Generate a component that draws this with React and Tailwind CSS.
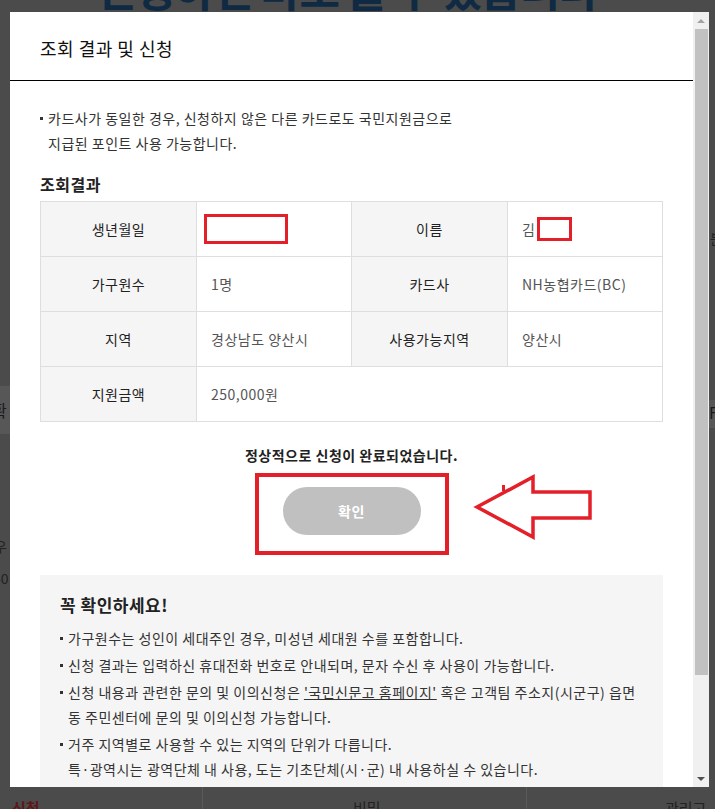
import React from "react";

const font = "font-['Noto_Sans_CJK_KR','Noto_Sans',sans-serif]";

function Bullet({ children }) {
  return (
    <li className="pl-[8px]">
      <span className="inline-block w-[3px] h-[3px] bg-[#333] align-middle -ml-[8px] mr-[5px] mb-[3px]"></span>
      {children}
    </li>
  );
}

function Th({ children }) {
  return (
    <th className="w-[156px] h-[55px] bg-[#f5f5f5] border border-[#dedede] font-normal text-[#222] text-center">
      {children}
    </th>
  );
}

function Td({ children, colSpan }) {
  return (
    <td colSpan={colSpan} className="h-[55px] border border-[#dedede] text-[#555] pl-[14px]">
      {children}
    </td>
  );
}

function Scrollbar() {
  return (
    <div className="w-[16px] bg-[#f0f0f0] flex flex-col items-center">
      <div className="h-[17px] flex items-center justify-center">
        <div className="w-0 h-0 border-l-[4px] border-r-[4px] border-b-[4px] border-l-transparent border-r-transparent border-b-[#a3a3a3]"></div>
      </div>
      <div className="w-[13px] h-[646px] bg-[#c1c1c1]"></div>
      <div className="flex-1"></div>
      <div className="h-[17px] flex items-center justify-center">
        <div className="w-0 h-0 border-l-[4px] border-r-[4px] border-t-[4px] border-l-transparent border-r-transparent border-t-[#505050]"></div>
      </div>
    </div>
  );
}

export default function App() {
  return (
    <div className={`relative w-[715px] h-[809px] overflow-hidden bg-[#4b4b4b] ${font}`}>
      {/* page behind the overlay */}
      <div className="absolute left-[96px] -top-[34px] text-[44px] leading-none font-bold text-[#0f2a42] whitespace-nowrap tracking-[-1.5px]">
        신청하면 바로 쓸 수 있습니다
      </div>
      <div className="absolute left-0 top-[386px] w-[10px] h-[48px] bg-[#575757] overflow-hidden">
        <span className="block -ml-[8px] mt-[12px] text-[16px] text-[#1a1a1a]">확</span>
      </div>
      <div className="absolute left-[-6px] top-[536px] text-[14px] text-[#222]">우</div>
      <div className="absolute left-[-4px] top-[568px] text-[14px] text-[#222]">-0</div>
      <div className="absolute left-[710px] top-[228px] text-[14px] text-[#222]">분</div>
      <div className="absolute left-[709px] top-[400px] w-[6px] h-[28px] bg-[#575757] text-[16px] text-[#1a1a1a]">F</div>
      <div className="absolute left-0 top-[787px] w-[715px] h-[22px] flex text-[15px] leading-[20px]">
        <div className="w-[203px] border-r border-[#5a5a5a] pl-[12px] pt-[11px] text-[#5c1818] font-bold">신청</div>
        <div className="w-[324px] border-r border-[#5a5a5a] pl-[150px] pt-[11px] text-[#222]">비밀</div>
        <div className="flex-1 pl-[138px] pt-[11px] text-[#222]">관리고</div>
      </div>

      {/* modal */}
      <div className="absolute left-[10px] top-[12px] w-[699px] h-[775px] bg-white flex">
        <div className="flex-1 flex flex-col overflow-hidden">
          <div className="h-[69px] pt-[4px] pl-[30px] flex items-center border-b border-black shrink-0">
            <h2 className="text-[18px] text-[#111] tracking-[0.5px]">조회 결과 및 신청</h2>
          </div>
          <div className="px-[30px] pt-[25px] text-[14px] tracking-[0.5px]">
            <ul className="leading-[25px] text-[#333]">
              <Bullet>
                카드사가 동일한 경우, 신청하지 않은 다른 카드로도 국민지원금으로
                <br />지급된 포인트 사용 가능합니다.
              </Bullet>
            </ul>
            <h3 className="mt-[16px] text-[16px] font-bold leading-[24px] text-[#222]">조회결과</h3>
            <table className="mt-[5px] w-[623px] border-collapse table-fixed">
              <tbody>
                <tr>
                  <Th>생년월일</Th>
                  <Td>
                    <span className="inline-block align-middle w-[84px] h-[30px] border-[3px] border-[#e3202a] -ml-[7px]"></span>
                  </Td>
                  <Th>이름</Th>
                  <Td>
                    <span className="align-middle">김</span>
                    <span className="inline-block align-middle w-[35px] h-[24px] border-[3px] border-[#e3202a] ml-[2px]"></span>
                  </Td>
                </tr>
                <tr>
                  <Th>가구원수</Th>
                  <Td>1명</Td>
                  <Th>카드사</Th>
                  <Td>NH농협카드(BC)</Td>
                </tr>
                <tr>
                  <Th>지역</Th>
                  <Td>경상남도 양산시</Td>
                  <Th>사용가능지역</Th>
                  <Td>양산시</Td>
                </tr>
                <tr>
                  <Th>지원금액</Th>
                  <Td colSpan={3}>250,000원</Td>
                </tr>
              </tbody>
            </table>
            <p className="mt-[22px] text-center font-bold text-[14px] leading-[22px] text-[#222]">
              정상적으로 신청이 완료되었습니다.
            </p>
            <div className="mt-[21px] flex justify-center">
              <button className="w-[138px] h-[48px] rounded-full bg-[#c0c0c0] text-white font-bold text-[14px]">
                확인
              </button>
            </div>
            <div className="mt-[40px] bg-[#f5f5f5] pl-[20px] pr-[10px] pt-[18px] pb-[20px]">
              <h4 className="text-[17px] font-bold leading-[24px] text-[#222]">꼭 확인하세요!</h4>
              <ul className="mt-[9px] leading-[25px] text-[#333] space-y-[2px]">
                <Bullet>가구원수는 성인이 세대주인 경우, 미성년 세대원 수를 포함합니다.</Bullet>
                <Bullet>신청 결과는 입력하신 휴대전화 번호로 안내되며, 문자 수신 후 사용이 가능합니다.</Bullet>
                <Bullet>
                  신청 내용과 관련한 문의 및 이의신청은 <span className="underline">'국민신문고 홈페이지'</span> 혹은 고객팀 주소지(시군구) 읍면
                  <br />동 주민센터에 문의 및 이의신청 가능합니다.
                </Bullet>
                <Bullet>
                  거주 지역별로 사용할 수 있는 지역의 단위가 다릅니다.
                  <br />특·광역시는 광역단체 내 사용, 도는 기초단체(시·군) 내 사용하실 수 있습니다.
                </Bullet>
                <Bullet>사용처는 카드사 홈페이지 및 지자체 홈페이지에서 확인하실 수 있습니다.</Bullet>
              </ul>
            </div>
          </div>
        </div>
        <Scrollbar />
      </div>

      {/* annotations */}
      <div className="absolute left-[255px] top-[473px] w-[194px] h-[82px] border-[4px] border-[#e3202a]"></div>
      <svg className="absolute left-[470px] top-[470px]" width="130" height="75" viewBox="0 0 130 75">
        <polygon
          points="7,37 63,7 63,22 120,22 120,48 63,48 63,67"
          fill="white"
          stroke="#e3202a"
          strokeWidth="3.5"
          strokeLinejoin="miter"
        />
        <rect x="32" y="15" width="3" height="6" fill="#e3202a" />
      </svg>
    </div>
  );
}
